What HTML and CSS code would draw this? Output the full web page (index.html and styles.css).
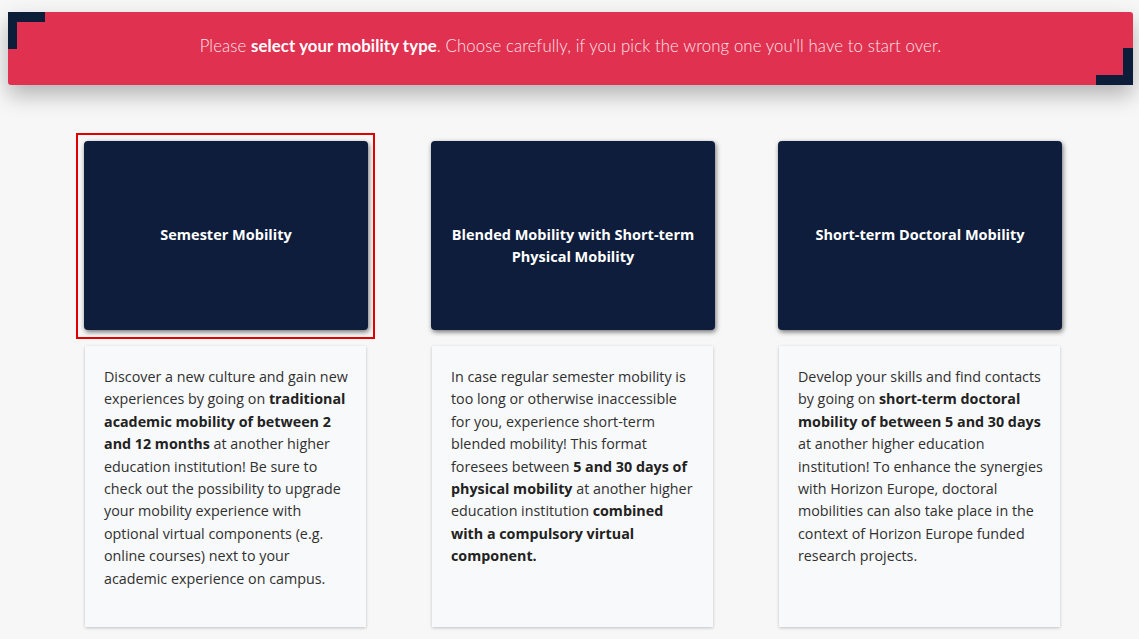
FILE: index.html
```html
<!DOCTYPE html>
<html lang="en">
<head>
    <meta charset="UTF-8">
    <meta name="viewport" content="width=device-width, initial-scale=1.0">
    <title>Select mobility type</title>
    <link rel="stylesheet" href="styles.css">
</head>
<body>
    <div class="notice">
        <span class="corner corner-tl"></span>
        <p>Please <b>select your mobility type</b>. Choose carefully, if you pick the wrong one you'll have to start over.</p>
        <span class="corner corner-br"></span>
    </div>

    <div class="types">
        <div class="type">
            <div class="type-head selected">Semester Mobility</div>
            <div class="type-desc">
                Discover a new culture and gain new experiences by going on <b>traditional academic mobility of between 2 and 12 months</b> at another higher education institution! Be sure to check out the possibility to upgrade your mobility experience with optional virtual components (e.g. online courses) next to your academic experience on campus.
            </div>
        </div>

        <div class="type">
            <div class="type-head">Blended Mobility with Short-term Physical Mobility</div>
            <div class="type-desc">
                In case regular semester mobility is too long or otherwise inaccessible for you, experience short-term blended mobility! This format foresees between <b>5 and 30 days of physical mobility</b> at another higher education institution <b>combined with a compulsory virtual component.</b>
            </div>
        </div>

        <div class="type">
            <div class="type-head">Short-term Doctoral Mobility</div>
            <div class="type-desc">
                Develop your skills and find contacts by going on <b>short-term doctoral mobility of between 5 and 30 days</b> at another higher education institution! To enhance the synergies with Horizon Europe, doctoral mobilities can also take place in the context of Horizon Europe funded research projects.
            </div>
        </div>
    </div>
</body>
</html>
```

FILE: styles.css
```css
body {
    margin: 0;
    padding: 12px 6px 0 8px;
    background: #f7f7f7;
    font-family: 'Open Sans', 'Noto Sans', sans-serif;
    color: #2b2b2b;
    overflow: hidden;
    height: 100vh;
    box-sizing: border-box;
}

.notice {
    position: relative;
    height: 73px;
    background: #e13151;
    border-radius: 0 3px 3px 3px;
    box-shadow: 0 10px 22px rgba(0, 0, 0, 0.28);
    display: flex;
    align-items: center;
    justify-content: center;
}

.notice p {
    margin: 0 0 6px 0;
    font-family: 'Lato', sans-serif;
    font-weight: 300;
    font-size: 16.8px;
    color: #fbe3e7;
    letter-spacing: 0.1px;
}

.notice b {
    font-weight: 700;
    color: #fff;
}

.corner {
    position: absolute;
    width: 37px;
    height: 37px;
    border: 0 solid #0c1d3a;
    box-sizing: border-box;
}

.corner-tl {
    top: 0;
    left: 0;
    border-top-width: 10px;
    border-left-width: 9px;
}

.corner-br {
    bottom: 0;
    right: 0;
    border-bottom-width: 10px;
    border-right-width: 10px;
}

.types {
    display: grid;
    grid-template-columns: repeat(3, 284px);
    column-gap: 63px;
    padding: 56px 0 0 76px;
}

.type {
    display: flex;
    flex-direction: column;
}

.type-head {
    position: relative;
    height: 189px;
    box-sizing: border-box;
    background: #0d1d3b;
    border-radius: 4px;
    box-shadow: 1px 2px 5px rgba(0, 0, 0, 0.55);
    text-align: center;
    padding: 83px 20px 0;
    color: #fff;
    font-weight: 700;
    font-size: 14.5px;
    line-height: 22px;
}

/* selected state: square red frame around the tile */
.type-head.selected::after {
    content: '';
    position: absolute;
    top: -8px;
    left: -8px;
    right: -7px;
    bottom: -9px;
    border: 2px solid #e00000;
}

.type-desc {
    margin: 16px 2px 0 1px;
    height: 281px;
    box-sizing: border-box;
    background: #f8f9fa;
    box-shadow: 0 1px 3px rgba(0, 0, 0, 0.22);
    padding: 20px 14px 0 19px;
    font-size: 14.3px;
    line-height: 22.4px;
    color: #303030;
}

.type-desc b {
    font-weight: 700;
    color: #222;
}
```
